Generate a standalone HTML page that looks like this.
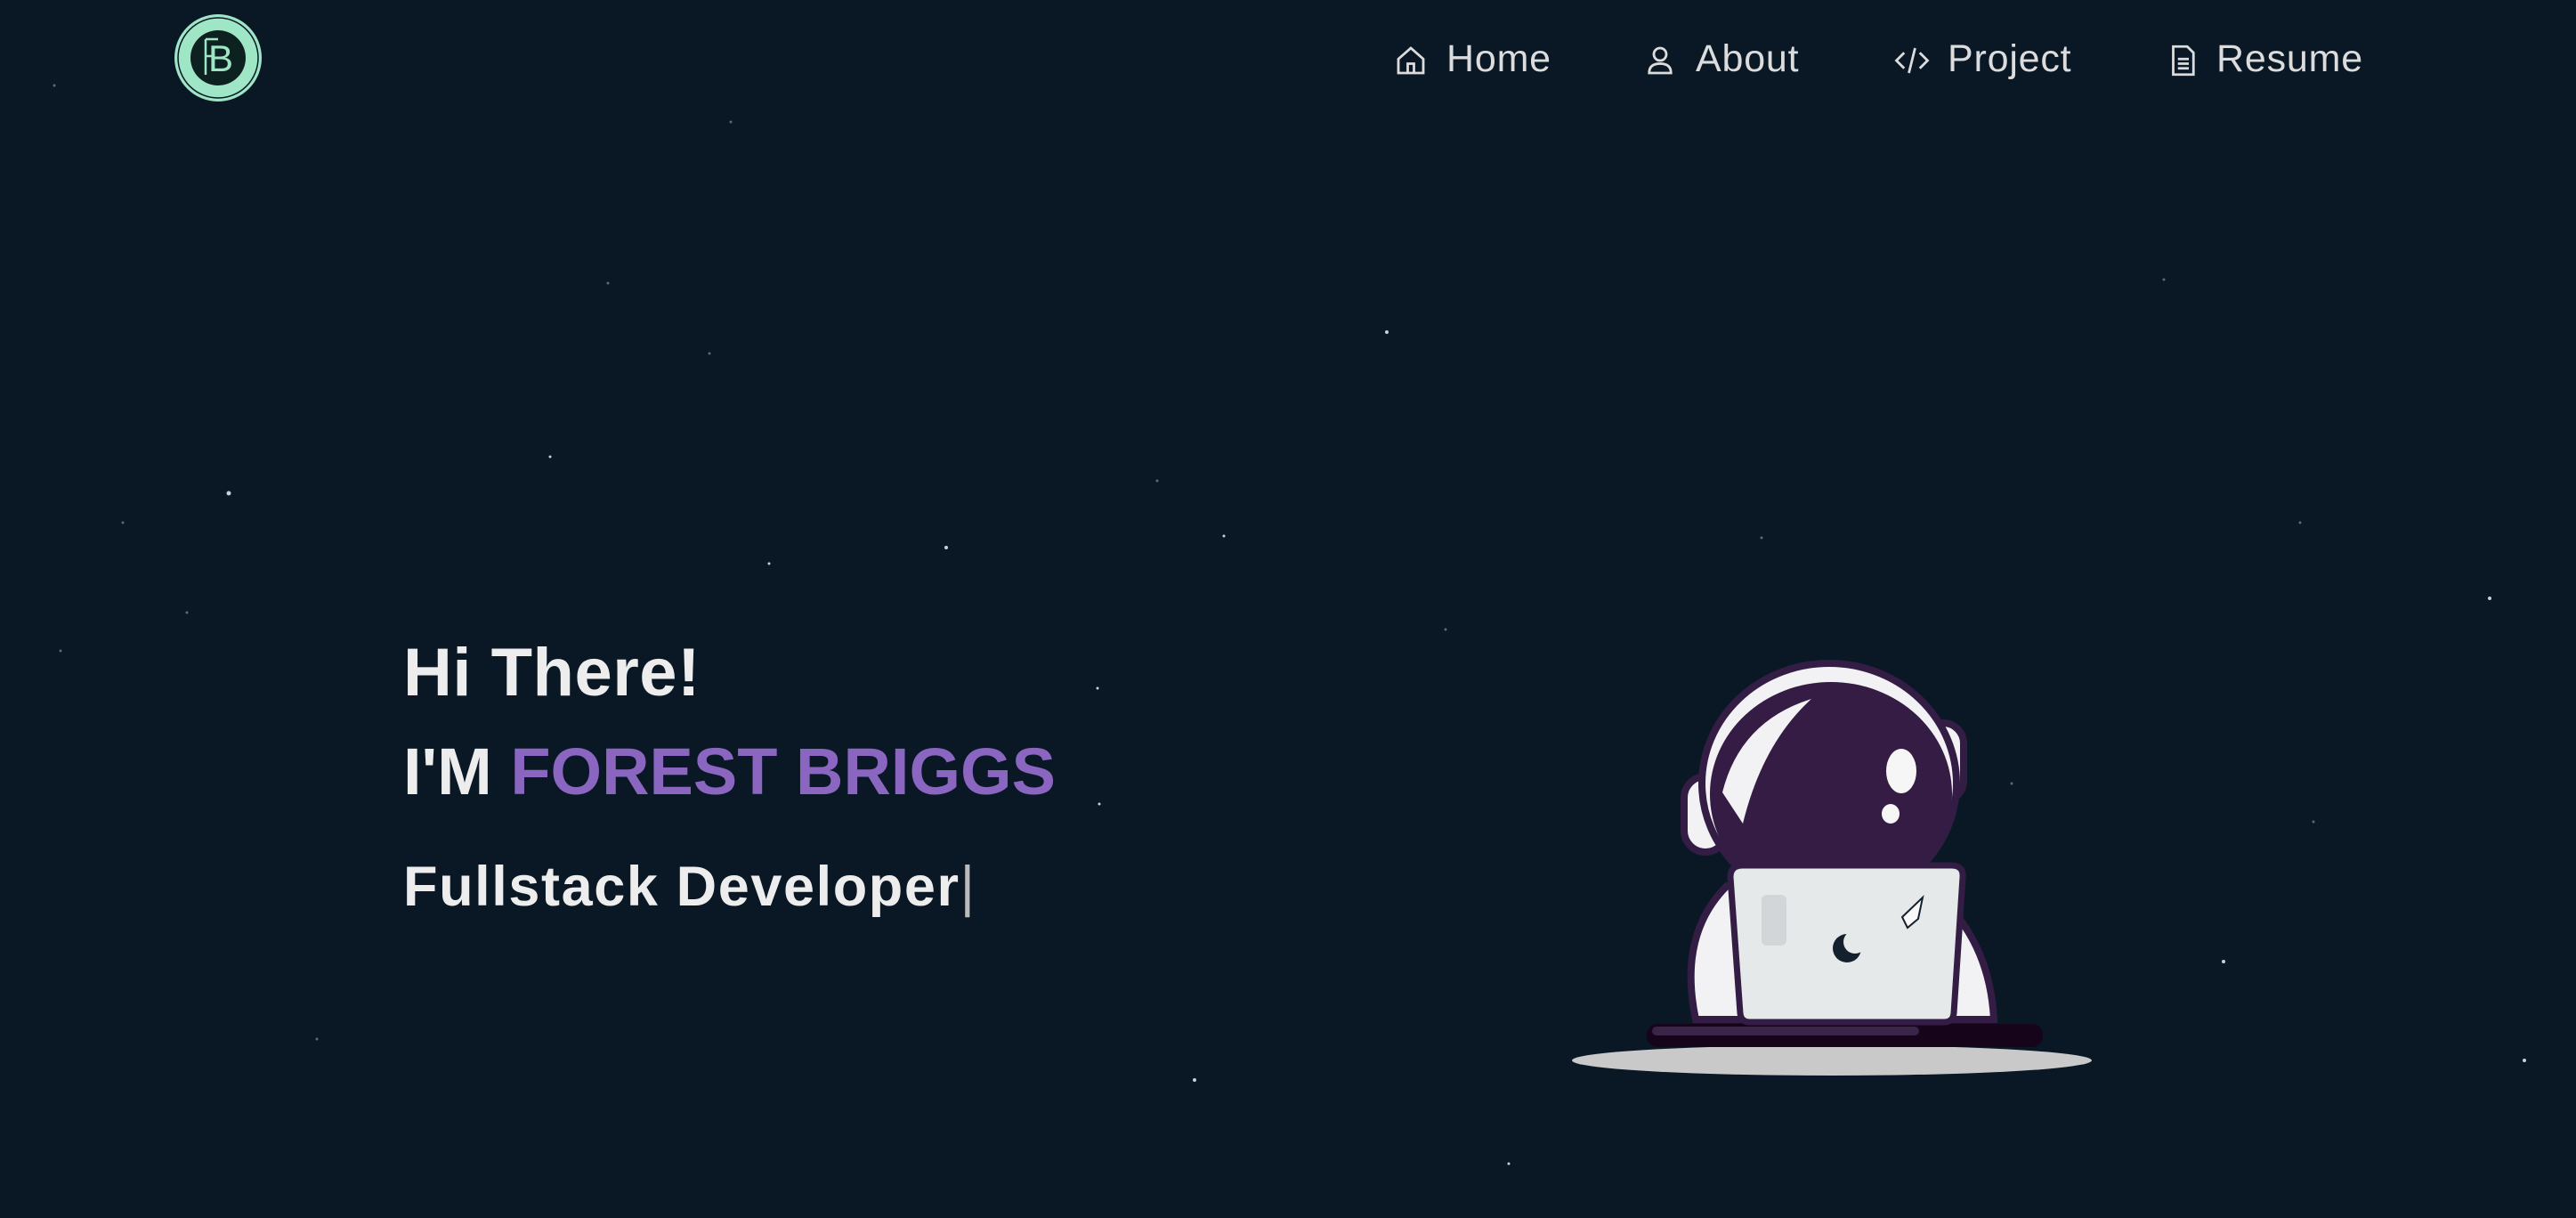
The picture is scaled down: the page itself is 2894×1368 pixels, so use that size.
<!DOCTYPE html>
<html><head><meta charset="utf-8"><style>
html,body{margin:0;padding:0}
body{width:2894px;height:1368px;background:#0a1826;position:relative;overflow:hidden;font-family:"Liberation Sans",sans-serif}
.nav{position:absolute;top:40px;height:52px;display:flex;align-items:center;color:#dcdcdc;font-size:43px;letter-spacing:0.8px}
.nav svg{position:absolute;left:0;top:7px}
.nav span{position:absolute;white-space:nowrap}
.t{position:absolute;left:453px;color:#ededed;font-weight:700;white-space:nowrap}
</style></head><body>
<svg width="2894" height="1368" style="position:absolute;left:0;top:0">
<g fill="#c8d0d8">
<circle cx="257" cy="554" r="2.5"/><circle cx="618" cy="513" r="1.5"/><circle cx="1558" cy="373" r="2"/><circle cx="1063" cy="615" r="2"/><circle cx="864" cy="633" r="1.5"/><circle cx="1375" cy="602" r="1.5"/><circle cx="2797" cy="672" r="2"/><circle cx="2498" cy="1080" r="2"/><circle cx="2836" cy="1191" r="2"/><circle cx="1342" cy="1213" r="2"/><circle cx="1695" cy="1307" r="1.5"/><circle cx="1233" cy="773" r="1.5"/><circle cx="1235" cy="903" r="1.5"/>
</g>
<g fill="#5a6a78">
<circle cx="2431" cy="314" r="1.5"/><circle cx="2599" cy="923" r="1.5"/><circle cx="210" cy="688" r="1.5"/><circle cx="138" cy="587" r="1.5"/><circle cx="68" cy="731" r="1.5"/><circle cx="356" cy="1167" r="1.5"/><circle cx="1979" cy="604" r="1.5"/><circle cx="2584" cy="587" r="1.5"/><circle cx="1624" cy="707" r="1.5"/><circle cx="683" cy="318" r="1.5"/><circle cx="797" cy="397" r="1.5"/><circle cx="61" cy="96" r="1.5"/><circle cx="821" cy="137" r="1.5"/><circle cx="1300" cy="540" r="1.5"/><circle cx="2260" cy="880" r="1.5"/>
</g>
<!-- logo -->
<circle cx="245" cy="65" r="49" fill="#9ee6c6"/>
<circle cx="245" cy="65" r="45" fill="none" stroke="#0a1826" stroke-width="1.5"/>
<circle cx="245" cy="65" r="31" fill="#0d2220"/>
<text x="248" y="80" font-family="Liberation Sans" font-size="42" fill="#9ee6c6" text-anchor="middle">B</text>
<path d="M231 44v40M231 44h14M231 63h9" stroke="#9ee6c6" stroke-width="2.5" fill="none"/>
<!-- astronaut -->
<ellipse cx="2058" cy="1191" rx="292" ry="17" fill="#c9c9c9"/>
<rect x="1850" y="1150" width="445" height="26" rx="12" fill="#16051a"/>
<rect x="1856" y="1153" width="300" height="10" rx="5" fill="#3a2448"/>
<!-- body -->
<path d="M1905 1145 Q1885 1050 1940 995 L2165 995 Q2235 1050 2240 1145 Z" fill="#f2f2f4" stroke="#331d44" stroke-width="8"/>
<!-- ears -->
<rect x="1892" y="872" width="48" height="85" rx="24" fill="#f2f2f4" stroke="#331d44" stroke-width="8"/>
<rect x="2160" y="812" width="46" height="88" rx="23" fill="#f2f2f4" stroke="#331d44" stroke-width="8"/>
<!-- helmet -->
<ellipse cx="2055" cy="880" rx="143" ry="135" fill="#f2f2f4" stroke="#331d44" stroke-width="8"/>
<ellipse cx="2057" cy="892" rx="136" ry="126" fill="#341c44"/>
<path d="M1935 890 Q1955 810 2035 785 Q1980 835 1958 925 Z" fill="#f2f2f4"/>
<ellipse cx="2136" cy="866" rx="17" ry="25" fill="#f6f6f6"/>
<ellipse cx="2124" cy="914" rx="10" ry="11" fill="#f6f6f6"/>
<!-- laptop -->
<path d="M1944 985 Q1944 972 1958 972 L2192 972 Q2206 972 2205 985 L2195 1138 Q2194 1148 2184 1148 L1966 1148 Q1956 1148 1955 1138 Z" fill="#e6e9ea" stroke="#331d44" stroke-width="7"/>
<rect x="1979" y="1005" width="28" height="57" rx="6" fill="#d2d6d8"/>
<circle cx="2075" cy="1065" r="16" fill="#15202e"/>
<circle cx="2084" cy="1058" r="13" fill="#e6e9ea"/>
<path d="M2137 1030 L2160 1008 L2155 1032 L2143 1042 Z" fill="#fafafa" stroke="#15202e" stroke-width="2"/>
</svg>
<div class="nav" style="left:1564px;width:220px"><svg width="42" height="42" viewBox="0 0 24 24" fill="none" stroke="#dcdcdc" stroke-width="1.6"><path d="M4 11L12 4l8 7v9H4zM10 20v-6h4v6"/></svg><span style="left:61px">Home</span></div>
<div class="nav" style="left:1844px;width:220px"><svg width="42" height="42" viewBox="0 0 24 24" fill="none" stroke="#dcdcdc" stroke-width="1.6"><circle cx="12" cy="8" r="4"/><path d="M5 20q0-6 7-6t7 6z"/></svg><span style="left:61px">About</span></div>
<div class="nav" style="left:2127px;width:220px"><svg width="42" height="42" viewBox="0 0 24 24" fill="none" stroke="#dcdcdc" stroke-width="1.6"><path d="M7 7l-5 5 5 5M17 7l5 5-5 5M14 4l-4 16"/></svg><span style="left:61px">Project</span></div>
<div class="nav" style="left:2431px;width:260px"><svg width="42" height="42" viewBox="0 0 24 24" fill="none" stroke="#dcdcdc" stroke-width="1.6"><path d="M6 3h9l4 4v14H6zM9 11h7M9 14h7M9 17h7"/></svg><span style="left:59px">Resume</span></div>
<div class="t" style="top:712px;font-size:76px;letter-spacing:0.5px">Hi There!</div>
<div class="t" style="top:824px;font-size:74px">I'M <span style="color:#8a66c0">FOREST BRIGGS</span></div>
<div class="t" style="top:960px;font-size:63px;letter-spacing:1.6px">Fullstack Developer<span style="font-weight:300;color:#bbb">|</span></div>
</body></html>
